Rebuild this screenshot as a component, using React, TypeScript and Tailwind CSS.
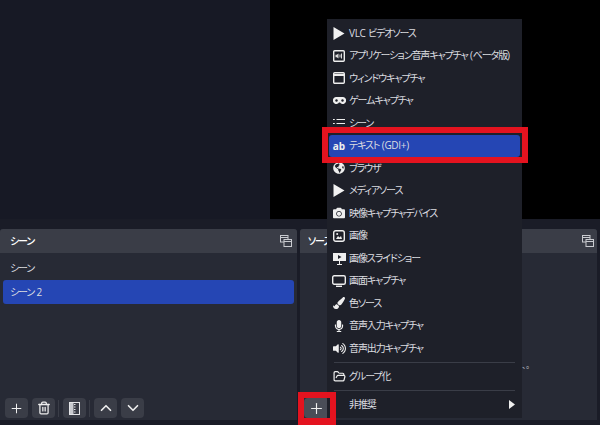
import React from "react";
import { ChevronDown, ChevronUp, FolderOpen, Plus, Trash2 } from "lucide-react";
import { FaCamera, FaGlobeAmericas, FaMicrophone, FaPaintBrush, FaVolumeUp } from "react-icons/fa";

const Play = () => (
  <svg width="12" height="13" viewBox="0 0 12 13"><path d="M0.500 0l11 6.500-11 6.500z" fill="#f2f2f2" /></svg>
);

const AppAudio = () => (
  <svg width="12" height="12" viewBox="0 0 12 12" fill="none">
    <rect x="0.700" y="0.700" width="10.600" height="10.600" rx="1" stroke="#eee" strokeWidth="1.400" />
    <path d="M2.500 4.800h1.300L5.500 3.400v5.200L3.800 7.200H2.500z" fill="#ddd" />
    <path d="M7 4.500v3M8.500 3.500v5" stroke="#ddd" />
  </svg>
);

const WindowIcon = () => (
  <svg width="12" height="12" viewBox="0 0 12 12" fill="none">
    <rect x="0.700" y="0.700" width="10.600" height="10.600" rx="1" stroke="#eee" strokeWidth="1.400" />
    <path d="M1 3h10" stroke="#eee" strokeWidth="2" />
  </svg>
);

const Gamepad = () => (
  <svg width="13" height="7" viewBox="0 0 13 7">
    <path d="M3.500 0h6a3.500 3.500 0 1 1-1.500 6.600L7 5.500H6L5 6.600A3.500 3.500 0 1 1 3.500 0z" fill="#eee" />
    <circle cx="3.500" cy="3.500" r="1.200" fill="#1e2029" />
    <circle cx="9.500" cy="3.500" r="1.200" fill="#1e2029" />
  </svg>
);

const ListIcon = () => (
  <svg width="12" height="11" viewBox="0 0 12 11" stroke="#eee" strokeWidth="1.200">
    <path d="M0 1.500h1.800M3.500 1.500H12M0 5.500h1.800M3.500 5.500H12M0 9.500h1.800M3.500 9.500H12" />
  </svg>
);

const ImageIcon = () => (
  <svg width="12" height="12" viewBox="0 0 12 12" fill="none">
    <rect x="0.700" y="0.700" width="10.600" height="10.600" rx="2" stroke="#eee" strokeWidth="1.400" />
    <path d="M3 9l2-3 1.500 1.500L8 6l1 3z" fill="#eee" />
    <circle cx="4.200" cy="4" r="1" fill="#eee" />
  </svg>
);

const Slideshow = () => (
  <svg width="13" height="13" viewBox="0 0 13 13" fill="none">
    <path d="M0 1h13v8H0z" fill="#eee" />
    <path d="M6.500 9v3M4 12.500h5" stroke="#eee" />
    <path d="M5 3l3.500 2L5 7z" fill="#1e2029" />
  </svg>
);

const Monitor = () => (
  <svg width="14" height="12" viewBox="0 0 14 12" fill="none">
    <rect x="0.700" y="0.700" width="12.600" height="8.600" rx="1.500" stroke="#eee" strokeWidth="1.400" />
    <path d="M4 11.300h6" stroke="#eee" strokeWidth="1.400" />
  </svg>
);

// overlapping windows button on the dock titles
const DockIcon = () => (
  <svg width="12" height="12" viewBox="0 0 12 12" fill="none" stroke="#c9cbd0">
    <rect x="0.500" y="0.500" width="7.500" height="6.500" />
    <path d="M0.500 2.500h7.500" />
    <rect x="4" y="4.500" width="7.500" height="7" fill="#3a3d47" />
    <path d="M4 6.500h7.500" />
  </svg>
);

const FilterIcon = () => (
  <svg width="11" height="13" viewBox="0 0 11 13" fill="none">
    <rect x="0.500" y="0.500" width="10" height="12" stroke="#e4e5e8" />
    <path d="M1 1h3.500v11H1z" fill="#c9cbd0" />
    <path d="M5 2.500h1.500M5 5h1.500M5 7.500h1.500M5 10h1.500" stroke="#e4e5e8" />
  </svg>
);

// latin parts keep normal spacing, only the kana are squeezed
const Latin = ({ children }: { children: React.ReactNode }) => (
  <span className="tracking-[-0.3px]">{children}</span>
);

type Item = { id: string; label: React.ReactNode; icon: React.ReactNode; selected?: boolean };

const items: Item[] = [
  { id: "vlc", label: <><Latin>VLC </Latin>ビデオソース</>, icon: <Play /> },
  { id: "app", label: <>アプリケーション音声キャプチャ<Latin> (</Latin>ベータ版<Latin>)</Latin></>, icon: <AppAudio /> },
  { id: "window", label: "ウィンドウキャプチャ", icon: <WindowIcon /> },
  { id: "game", label: "ゲームキャプチャ", icon: <Gamepad /> },
  { id: "scene", label: "シーン", icon: <ListIcon /> },
  {
    id: "text",
    label: <>テキスト<Latin> (GDI+)</Latin></>,
    icon: <span className="font-bold text-[10px] leading-none text-[#eee] tracking-normal">ab</span>,
    selected: true,
  },
  { id: "browser", label: "ブラウザ", icon: <FaGlobeAmericas size={12} color="#eee" /> },
  { id: "media", label: "メディアソース", icon: <Play /> },
  { id: "device", label: "映像キャプチャデバイス", icon: <FaCamera size={12} color="#eee" /> },
  { id: "image", label: "画像", icon: <ImageIcon /> },
  { id: "slides", label: "画像スライドショー", icon: <Slideshow /> },
  { id: "display", label: "画面キャプチャ", icon: <Monitor /> },
  { id: "color", label: "色ソース", icon: <FaPaintBrush size={12} color="#eee" /> },
  { id: "input", label: "音声入力キャプチャ", icon: <FaMicrophone size={12} color="#eee" /> },
  { id: "output", label: "音声出力キャプチャ", icon: <FaVolumeUp size={13} color="#eee" /> },
];

const MenuRow = ({ item }: { item: Item }) => (
  <div
    className={`flex items-center h-[22.5px] mx-[2px] px-[2px] rounded-[3px] whitespace-nowrap text-[#dcdde0] ${
      item.selected ? "bg-[#2546b4]" : ""
    }`}
  >
    <span className="w-[16px] flex justify-center shrink-0">{item.icon}</span>
    <span className="ml-[2px]">{item.label}</span>
  </div>
);

const ToolButton = ({ children, className = "" }: { children?: React.ReactNode; className?: string }) => (
  <div className={`w-[23px] h-[20px] rounded-[4px] bg-[#3a3d47] flex items-center justify-center text-[#eee] ${className}`}>
    {children}
  </div>
);

const Divider = () => <div className="w-px h-[17px] bg-[#3a3d47] ml-[-1px]" />;

export default function App() {
  return (
    <div
      className="relative w-[600px] h-[425px] overflow-hidden bg-[#1a1c27] flex flex-col text-[10px] tracking-[-1.1px] [font-feature-settings:'palt']"
      style={{ fontFamily: '"Open Sans", "Noto Sans CJK JP", sans-serif' }}
    >
      <div className="flex h-[219px] shrink-0">
        <div className="w-[270px] bg-[#171925]" />
        <div className="flex-1 bg-black" />
      </div>

      <div className="flex gap-[3px] pt-[10px] pr-[3px] pb-[5px] flex-1 min-h-0">
        {/* scenes dock */}
        <section className="w-[297px] rounded-t-[3px] bg-[#272a35] flex flex-col">
          <header className="h-[24px] bg-[#3a3d47] rounded-t-[3px] flex items-center justify-between pl-[10px] pr-[5px] text-white font-medium">
            シーン
            <DockIcon />
          </header>
          <div className="px-[3px] pt-[3px] flex-1 text-[#dcdde0]">
            <div className="h-[24px] flex items-center pl-[7px]">シーン</div>
            <div className="h-[24px] flex items-center pl-[7px] rounded-[3px] bg-[#2546b4] whitespace-pre">
              <span>シーン<Latin> 2</Latin></span>
            </div>
          </div>
          <div className="flex items-center gap-[4px] pl-[5px] pb-[2px]">
            <ToolButton><Plus size={15} strokeWidth={1.6} /></ToolButton>
            <ToolButton><Trash2 size={14} strokeWidth={2.2} /></ToolButton>
            <Divider />
            <ToolButton><FilterIcon /></ToolButton>
            <Divider />
            <ToolButton><ChevronUp size={18} strokeWidth={2.2} /></ToolButton>
            <ToolButton><ChevronDown size={18} strokeWidth={2.2} /></ToolButton>
          </div>
        </section>

        {/* sources dock, mostly under the menu */}
        <section className="flex-1 rounded-t-[3px] bg-[#272a35] flex flex-col">
          <header className="h-[24px] bg-[#3a3d47] rounded-t-[3px] flex items-center justify-between pl-[8px] pr-[3px] text-white font-medium">
            ソース
            <DockIcon />
          </header>
          <div className="flex-1 flex items-end pl-[222px] pb-[27px] text-[#b8bac0] text-[8px] tracking-normal">
            、。
          </div>
          <div className="flex items-center gap-[3px] pl-[4px] pb-[2px]">
            <ToolButton className="w-[26px] pr-[1px] bg-[#4a4d57]"><Plus size={17} strokeWidth={1.6} /></ToolButton>
          </div>
        </section>
      </div>

      {/* popup menu */}
      <div className="absolute left-[327px] top-[19px] w-[195px] h-[399px] bg-[#1e2029] pt-[3px]">
        {items.map((item) => (
          <MenuRow key={item.id} item={item} />
        ))}
        <div className="h-px bg-[#3a3d47] mx-[7px] my-[2.5px]" />
        <div className="flex items-center h-[22px] mx-[2px] px-[2px] text-[#dcdde0]">
          <span className="w-[16px] flex justify-center shrink-0"><FolderOpen size={13} color="#eee" strokeWidth={2.2} /></span>
          <span className="ml-[2px]">グループ化</span>
        </div>
        <div className="h-px bg-[#3a3d47] mx-[7px] my-[2.5px]" />
        <div className="flex items-center justify-between h-[22px] mx-[2px] px-[2px] text-[#dcdde0]">
          <span className="ml-[18px]">非推奨</span>
          <svg width="6" height="9" viewBox="0 0 6 9" className="mr-[3px]"><path d="M0 0l6 4.500L0 9z" fill="#eee" /></svg>
        </div>
      </div>

      {/* red annotations */}
      <div className="absolute left-[322px] top-[127px] w-[206px] h-[36px] border-[6px] border-[#e4131f]" />
      <div className="absolute left-[298px] top-[392px] w-[38px] h-[33px] border-[6px] border-b-[7px] border-[#e4131f]" />
    </div>
  );
}
